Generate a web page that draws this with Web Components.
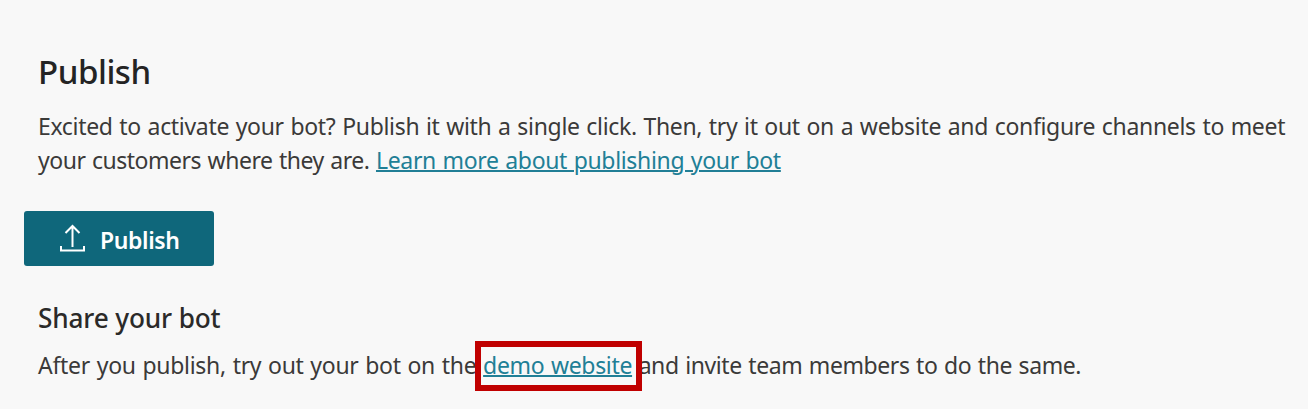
<!DOCTYPE html>
<html lang="en">
<head>
<meta charset="utf-8">
<title>Publish</title>
<style>
html, body { margin: 0; height: 100%; overflow: hidden; background: #f8f8f8; }
</style>
</head>
<body>
<publish-page></publish-page>
<script>
const define = (name, html) => {
  const template = document.createElement('template');
  template.innerHTML = html;
  customElements.define(name, class extends HTMLElement {
    constructor() {
      super();
      this.attachShadow({ mode: 'open' }).append(template.content.cloneNode(true));
    }
  });
};

define('text-link', `
<style>
:host { display: inline; color: #217f96; }
a { color: inherit; text-decoration: underline; text-decoration-thickness: 1.5px; text-underline-offset: 1px; cursor: pointer; }
</style><a><slot></slot></a>`);

define('highlight-box', `
<style>
:host { display: inline-block; position: relative; }
span { position: absolute; inset: -7px -10px -9px -8px; border: 6px solid #c00000; pointer-events: none; }
</style><slot></slot><span></span>`);

define('publish-button', `
<style>
:host { display: block; width: 190px; }
button { box-sizing: border-box; width: 100%; height: 55px; margin: 0; padding: 2px 0 0 36px; border: 0; border-radius: 3px; background: #0f677b; color: #fff; display: flex; align-items: center; gap: 15px; font: 600 23px/32px "Noto Sans", "Open Sans", sans-serif; letter-spacing: -0.4px; }
svg { display: block; width: 25px; height: 28px; margin-top: -3px; }
</style>
<button type="button"><svg viewBox="0 0 25 28" fill="none" stroke="#fff" stroke-width="2"><path d="M12.5 23V2M5.5 9 12.5 2 19.5 9M1 22V26.5H24V22"/></svg><slot></slot></button>`);

define('publish-page', `
<style>
:host { display: block; padding: 49px 0 0 24px; color: #3b3a39; font: 23px/34px "Noto Sans", "Open Sans", sans-serif; }
h1, h2, p { margin: 0 0 0 14px; white-space: nowrap; }
p { word-spacing: 1px; }
h1 { font-size: 33px; line-height: 46px; font-weight: 500; color: #242424; margin-bottom: 14px; letter-spacing: -0.45px; }
h2 { font-size: 26.2px; line-height: 36px; font-weight: 500; color: #2b2a29; margin-top: 34px; margin-bottom: 12px; letter-spacing: -0.15px; }
publish-button { margin-top: 34px; }
.intro { letter-spacing: -0.32px; }
.where { letter-spacing: -0.48px; }
.learn { letter-spacing: -0.34px; }
.after { letter-spacing: -0.28px; }
.demo { letter-spacing: -0.33px; }
.invite { letter-spacing: -0.42px; }
</style>
<h1>Publish</h1>
<p><span class="intro">Excited to activate your bot? Publish it with a single click. Then, try it out on a website and configure channels to meet</span><br><span class="where">your customers where they are. </span><text-link class="learn">Learn more about publishing your bot</text-link></p>
<publish-button>Publish</publish-button>
<h2>Share your bot</h2>
<p><span class="after">After you publish, try out your bot on the </span><highlight-box><text-link class="demo">demo website</text-link></highlight-box><span class="invite"> and invite team members to do the same.</span></p>`);
</script>
</body>
</html>
